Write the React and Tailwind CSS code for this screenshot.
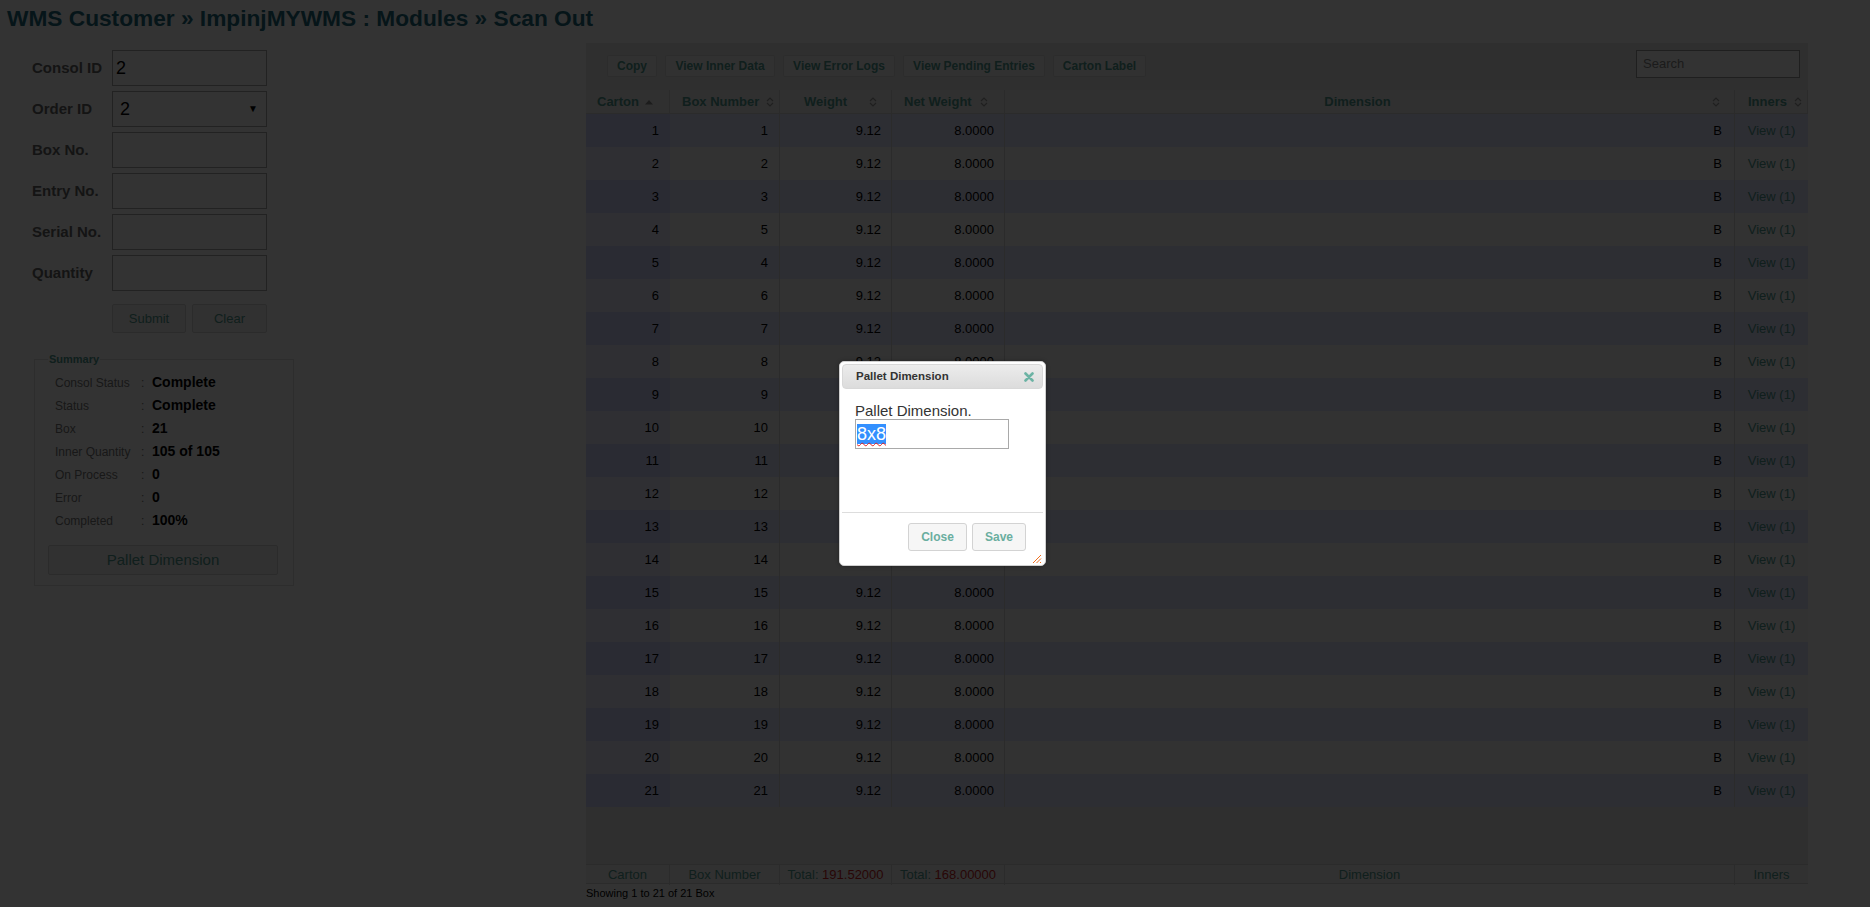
import React from 'react';

const ROWS = [
  [1, 1], [2, 2], [3, 3], [4, 5], [5, 4], [6, 6], [7, 7], [8, 8], [9, 9], [10, 10], [11, 11],
  [12, 12], [13, 13], [14, 14], [15, 15], [16, 16], [17, 17], [18, 18], [19, 19], [20, 20], [21, 21],
];

const FORM_FIELDS = ['Consol ID', 'Order ID', 'Box No.', 'Entry No.', 'Serial No.', 'Quantity'];

const SUMMARY = [
  ['Consol Status', 'Complete'],
  ['Status', 'Complete'],
  ['Box', '21'],
  ['Inner Quantity', '105 of 105'],
  ['On Process', '0'],
  ['Error', '0'],
  ['Completed', '100%'],
];

const TOOLBAR = [
  ['Copy', 'w-[50px]'],
  ['View Inner Data', 'w-[110px]'],
  ['View Error Logs', 'w-[112px]'],
  ['View Pending Entries', 'w-[142px]'],
  ['Carton Label', 'w-[93px]'],
];

const COLS = 'grid grid-cols-[84px_110px_112px_113px_730px_73px]';

const SortBoth = () => (
  <svg width="8" height="12" viewBox="0 0 8 12" className="text-[#9a9a9a]">
    <path d="M1 5 L4 2 L7 5 M1 7 L4 10 L7 7" fill="none" stroke="currentColor" strokeWidth="1.2" />
  </svg>
);

const SortAsc = () => (
  <svg width="8" height="6" viewBox="0 0 8 6">
    <path d="M0 5.5 L4 1 L8 5.5 Z" fill="#8a8a8a" />
  </svg>
);

const HeadCell = ({ label, pad, iconRight, asc, center }) => (
  <div className={`relative flex items-center h-full border-r border-[#d4d4d4] ${center ? 'justify-center' : ''} ${pad}`}>
    <span>{label}</span>
    <span className={`absolute top-[6px] ${iconRight}`}>
      {asc ? <span className="block pt-[3px]"><SortAsc /></span> : <SortBoth />}
    </span>
  </div>
);

export default function App() {
  return (
    <div className="relative w-[1870px] h-[907px] overflow-hidden bg-white font-['Liberation_Sans',Arial,sans-serif] text-black">
      {/* 제목 */}
      <h1 className="pl-[7px] pt-[5px] text-[22.7px] leading-[27px] font-bold text-[#206a7c]">
        WMS Customer » ImpinjMYWMS : Modules » Scan Out
      </h1>

      <div className="flex">
        {/* 왼쪽: 입력 폼 + 요약 */}
        <div className="w-[586px] shrink-0 pt-[18px]">
          <div className="flex flex-col gap-[5px] pl-[32px]">
            {FORM_FIELDS.map((f, i) => (
              <div key={f} className="flex items-center h-[36px]">
                <div className="w-[80px] text-[15px] font-bold text-[#666]">{f}</div>
                <div className="relative w-[155px] h-[36px] border border-[#aaa] bg-white flex items-center">
                  {i === 0 && <span className="pl-[3px] text-[18px]">2</span>}
                  {i === 1 && (
                    <>
                      <span className="pl-[7px] text-[18px]">2</span>
                      <span className="absolute right-[8px] top-[9px] text-[10px]">▼</span>
                    </>
                  )}
                </div>
              </div>
            ))}
          </div>

          <div className="flex gap-[6px] pl-[112px] mt-[13px]">
            <div className="w-[74px] h-[29px] flex items-center justify-center border border-[#d6d6d6] rounded-[2px] bg-[#f3f3f3] text-[13px] text-[#4f9a8f]">Submit</div>
            <div className="w-[75px] h-[29px] flex items-center justify-center border border-[#d6d6d6] rounded-[2px] bg-[#f3f3f3] text-[13px] text-[#4f9a8f]">Clear</div>
          </div>

          <fieldset className="ml-[34px] mt-[20px] w-[260px] border border-[#e2e2e2] pl-[13px] pr-[15px] pb-[10px]">
            <legend className="px-[1px] text-[11px] leading-[13px] font-bold text-[#4f9a8f]">Summary</legend>
            <div className="mt-[5px] pl-[7px]">
              {SUMMARY.map(([k, v]) => (
                <div key={k} className="flex items-center h-[23px]">
                  <div className="w-[86px] text-[12px] text-[#777]">{k}</div>
                  <div className="w-[11px] text-[12px] text-[#777]">:</div>
                  <div className="text-[14px] font-bold text-black">{v}</div>
                </div>
              ))}
            </div>
            <div className="mt-[13px] w-[230px] h-[30px] flex items-center justify-center border border-[#d6d6d6] rounded-[2px] bg-[#f3f3f3] text-[15px] text-[#4f9a8f]">
              Pallet Dimension
            </div>
          </fieldset>
        </div>

        {/* 오른쪽: 테이블 */}
        <div className="w-[1222px] shrink-0 pt-[11px]">
          <div className="bg-[#e8e8e8]">
            <div className="flex items-start h-[47px] pt-[6px] pl-[21px] pr-[8px]">
              <div className="flex gap-[8px] mt-[6px]">
                {TOOLBAR.map(([t, w]) => (
                  <div key={t} className={`${w} h-[22px] flex items-center justify-center bg-[#f6f6f6] border border-[#dcdcdc] rounded-[2px] text-[12px] font-bold text-[#4f9a8f]`}>
                    {t}
                  </div>
                ))}
              </div>
              <div className="ml-auto mt-[1px] w-[164px] h-[28px] border border-[#999] bg-white flex items-center pl-[6px] text-[13px] text-[#888]">
                Search
              </div>
            </div>

            {/* 헤더 */}
            <div className={`${COLS} h-[24px] bg-[#f0f0f0] border-b border-[#d4d4d4] text-[13px] font-bold text-[#4f9a8f]`}>
              <HeadCell label="Carton" pad="pl-[11px]" iconRight="right-[16px]" asc />
              <HeadCell label="Box Number" pad="pl-[12px]" iconRight="right-[5px]" />
              <HeadCell label="Weight" pad="pl-[24px]" iconRight="right-[14px]" />
              <HeadCell label="Net Weight" pad="pl-[12px]" iconRight="right-[16px]" />
              <HeadCell label="Dimension" pad="pr-[24px]" iconRight="right-[14px]" center />
              <HeadCell label="Inners" pad="pl-[13px]" iconRight="right-[5px]" />
            </div>

            {/* 본문 */}
            <div className="h-[750px] bg-[#ececec]">
              {ROWS.map(([c, b], i) => {
                const odd = i % 2 === 0;
                return (
                  <div key={c} className={`${COLS} h-[33px] text-[13px] ${odd ? 'bg-[#e2e4ff]' : 'bg-[#f8f8f8]'}`}>
                    <div className={`flex items-center justify-end pr-[11px] ${odd ? 'bg-[#d3d6ff]' : 'bg-[#eaebff]'}`}>{c}</div>
                    <div className="flex items-center justify-end pr-[11px] border-r border-[#d8d8d8]">{b}</div>
                    <div className="flex items-center justify-end pr-[10px] border-r border-[#d8d8d8]">9.12</div>
                    <div className="flex items-center justify-end pr-[10px] border-r border-[#d8d8d8]">8.0000</div>
                    <div className="flex items-center justify-end pr-[12px] border-r border-[#d8d8d8]">B</div>
                    <div className="flex items-center justify-center text-[#4f9a8f]">View (1)</div>
                  </div>
                );
              })}
            </div>

            {/* 푸터 */}
            <div className={`${COLS} h-[20px] bg-[#f4f4f4] border-t border-b border-[#d4d4d4] text-[13px] text-[#4f9a8f]`}>
              <div className="flex items-center justify-center border-r border-[#d4d4d4]">Carton</div>
              <div className="flex items-center justify-center border-r border-[#d4d4d4]">Box Number</div>
              <div className="flex items-center justify-center border-r border-[#d4d4d4]">
                Total:&nbsp;<span className="text-[#c81e1e]">191.52000</span>
              </div>
              <div className="flex items-center justify-center border-r border-[#d4d4d4]">
                Total:&nbsp;<span className="text-[#c81e1e]">168.00000</span>
              </div>
              <div className="flex items-center justify-center border-r border-[#d4d4d4]">Dimension</div>
              <div className="flex items-center justify-center">Inners</div>
            </div>
          </div>
          <div className="mt-[2px] text-[11px] leading-[14px]">Showing 1 to 21 of 21 Box</div>
        </div>
      </div>

      {/* 모달 오버레이 */}
      <div className="absolute inset-0 bg-black/80" />

      {/* 다이얼로그 */}
      <div className="absolute left-[839px] top-[361px] w-[207px] h-[205px] bg-white border border-[#cfcfcf] rounded-[5px] p-[2px] shadow-[0_0_4px_rgba(0,0,0,0.3)]">
        <div className="relative h-[25px] rounded-[4px] border border-[#d8d8d8] bg-gradient-to-b from-[#ececec] to-[#dcdcdc] flex items-center pl-[13px]">
          <span className="text-[11.5px] font-bold text-[#333]">Pallet Dimension</span>
          <svg className="absolute right-[8px] top-[7px]" width="10" height="10" viewBox="0 0 10 10">
            <path d="M1.5 1.5 L8.5 8.5 M8.5 1.5 L1.5 8.5" stroke="#6cb3a4" strokeWidth="2.6" strokeLinecap="round" />
          </svg>
        </div>
        <div className="h-[123px] pl-[13px] pt-[14px]">
          <div className="text-[15px] leading-[16px] text-[#333]">Pallet Dimension.</div>
          <div className="w-[154px] h-[30px] border border-[#a9a9a9] flex items-center pl-[1px]">
            <span className="text-[18px] leading-[20px] bg-[#3390ff] text-white underline decoration-wavy decoration-[#e02020] decoration-1 underline-offset-2">8x8</span>
          </div>
        </div>
        <div className="relative border-t border-[#dddddd] flex justify-end gap-[5px] pt-[10px] pr-[17px]">
          <div className="w-[59px] h-[28px] flex items-center justify-center bg-[#f6f6f6] border border-[#d3d3d3] rounded-[3px] text-[12px] font-bold text-[#6aae9f]">Close</div>
          <div className="w-[54px] h-[28px] flex items-center justify-center bg-[#f6f6f6] border border-[#d3d3d3] rounded-[3px] text-[12px] font-bold text-[#6aae9f]">Save</div>
          <svg className="absolute right-[1px] bottom-[-13px]" width="12" height="12" viewBox="0 0 12 12">
            <path d="M11 3 L3 11 M11 6.5 L6.5 11 M11 10 L10 11" stroke="#f07020" strokeWidth="1" />
          </svg>
        </div>
      </div>
    </div>
  );
}
